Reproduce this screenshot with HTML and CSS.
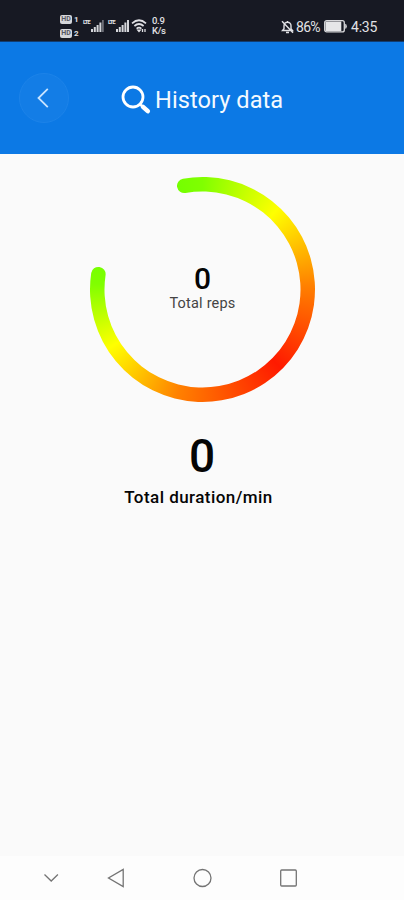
FILE: index.html
```html
<!DOCTYPE html>
<html lang="en">
<head>
    <meta charset="UTF-8">
    <meta name="viewport" content="width=device-width, initial-scale=1.0">
    <title>History data</title>
    <link rel="stylesheet" href="styles.css">
</head>
<body>
    <div class="screen">
        <div class="status-bar">
            <div class="status-left">
                <div class="sims">
                    <div class="sim"><span class="hd">HD</span><span>1</span></div>
                    <div class="sim"><span class="hd">HD</span><span>2</span></div>
                </div>
                <div class="signal">
                    <span class="lte">LTE</span>
                    <svg width="13" height="12" viewBox="0 0 13 12"><path d="M0 9h2v3H0zM2.8 7h2v5h-2zM5.6 5h2v7h-2zM8.4 2.5h2V12h-2z" fill="#d5d6da"/><path d="M11 0h1.8v12H11z" fill="#6d6e77"/></svg>
                </div>
                <div class="signal second">
                    <span class="lte">LTE</span>
                    <svg width="13" height="12" viewBox="0 0 13 12"><path d="M0 9h2v3H0zM2.8 7h2v5h-2zM5.6 5h2v7h-2zM8.4 2.5h2V12h-2zM11 0h2v12h-2z" fill="#d5d6da"/></svg>
                </div>
                <svg class="wifi" width="17" height="14" viewBox="0 0 17 14" fill="none" stroke="#e0e0e4" stroke-width="1.7"><path d="M1 4.3Q8 -1.8 15 4.3M3.4 7Q8 3 12.6 7M5.6 9.6Q8 7.6 10.4 9.6"/><path d="M6.8 11.2h2.4L8 12.6zM11.5 10v3M14 10v3" stroke-width="1.3"/></svg>
                <div class="speed"><span>0.9</span><span>K/s</span></div>
            </div>
            <div class="status-right">
                <svg width="13" height="14" viewBox="0 0 13 14" fill="none" stroke="#e0e0e4" stroke-width="1.4"><path d="M1.5 10.5h10L10 8.7V5.8a3.5 3.5 0 0 0-7 0v2.9zM6.5 1v1.5M5 12.5h3M1 1.2l11 11.6"/></svg>
                <span class="percent">86%</span>
                <svg class="battery" width="23" height="13" viewBox="0 0 23 13"><rect x=".7" y=".7" width="19.6" height="11.2" rx="2" fill="none" stroke="#d9d9dc" stroke-width="1.3"/><path d="M1.5 1.5h15.8v9.6H1.5z" fill="#e6e6e8"/><path d="M21.2 3.8q1.6 0 1.6 2.5t-1.6 2.5z" fill="#d9d9dc"/></svg>
                <span class="time">4:35</span>
            </div>
        </div>

        <header class="header">
            <button class="back" aria-label="Back">
                <svg width="12" height="20" viewBox="0 0 12 20" fill="none" stroke="#c8e4ff" stroke-width="1.8"><path d="M10.8 .8L1.5 10l9.3 9.2"/></svg>
            </button>
            <div class="title">
                <svg width="30" height="30" viewBox="0 0 30 30" fill="none" stroke="#fff"><circle cx="12" cy="12" r="10" stroke-width="2.8"/><path d="M19 19.2l3 3" stroke-width="2.5"/><path d="M22 21.8l4.8 4.4" stroke-width="4.5" stroke-linecap="round"/></svg>
                <h1>History data</h1>
            </div>
        </header>

        <main class="content">
            <svg class="defs" width="0" height="0">
                <clipPath id="arc">
                    <path d="M93 1.7A112.5 112.5 0 1 1 1.2 96.1A7.25 7.25 0 0 1 15.55 98.2A98 98 0 1 0 95.5 16A7.25 7.25 0 0 1 93 1.7Z"/>
                </clipPath>
            </svg>
            <div class="gauge">
                <div class="ring"></div>
                <div class="reps">
                    <span class="reps-value">0</span>
                    <span class="reps-label">Total reps</span>
                </div>
            </div>
            <div class="duration">
                <span class="duration-value">0</span>
                <span class="duration-label">Total duration/min</span>
            </div>
        </main>

        <nav class="nav-bar">
            <svg width="404" height="44" viewBox="0 0 404 44" fill="none" stroke="#747474" stroke-width="1.3">
                <path d="M44.5 18.5l6.7 6.5 6.7-6.5"/>
                <path d="M123.2 13.5v17L108.5 22z"/>
                <circle cx="202.5" cy="22" r="8.5"/>
                <rect x="280.7" y="14" width="15.6" height="16" rx="1"/>
            </svg>
        </nav>
    </div>
</body>
</html>
```
FILE: styles.css
```css
* {
    margin: 0;
    padding: 0;
    box-sizing: border-box;
}

body {
    font-family: Roboto, sans-serif;
    background: #fafafa;
    color: #050505;
}

svg {
    display: block;
    flex-shrink: 0;
}

.screen {
    width: 404px;
    height: 900px;
    display: flex;
    flex-direction: column;
    overflow: hidden;
}

.status-bar {
    height: 42px;
    background: #171923;
    border-bottom: 1px solid #123c70;
    color: #e2e2e5;
    display: flex;
    justify-content: space-between;
    padding: 14px 27px 0 60px;
}

.status-left {
    display: flex;
}

.sims {
    width: 23px;
    display: flex;
    flex-direction: column;
    gap: 4px;
}

.sim {
    display: flex;
    gap: 2px;
    align-items: center;
    height: 10px;
    font-size: 8px;
    font-weight: bold;
}

.hd {
    width: 12px;
    height: 9px;
    line-height: 9px;
    border-radius: 2px;
    background: #d5d6da;
    color: #555761;
    font-size: 7px;
    text-align: center;
}

.signal {
    display: flex;
    padding-top: 4px;
    width: 24px;
}

.signal.second {
    width: 25px;
    margin-left: 1px;
}

.signal svg {
    margin-top: 2px;
}

.lte {
    font-size: 6px;
    line-height: 7px;
    width: 8px;
    font-weight: bold;
    letter-spacing: -1px;
}

.wifi {
    margin: 5px 0 0 -2px;
}

.speed {
    display: flex;
    flex-direction: column;
    margin-left: 4px;
    padding-top: 2px;
    font-size: 9.5px;
    line-height: 10px;
    font-weight: 500;
    letter-spacing: -0.3px;
}

.status-right {
    display: flex;
    align-items: center;
    height: 25px;
    font-size: 14px;
    font-weight: 400;
}

.percent {
    width: 26px;
    margin-left: 2px;
    letter-spacing: -0.7px;
}

.battery {
    margin: 0 4px 0 2px;
}

.time {
    width: 26px;
    white-space: nowrap;
    letter-spacing: -0.2px;
}

.header {
    height: 112px;
    background: #0c79e5;
    display: flex;
    align-items: center;
    padding-left: 19px;
}

.back {
    width: 50px;
    height: 50px;
    border-radius: 50%;
    border: 1px solid #1c83e9;
    background: #137de6;
    display: flex;
    align-items: center;
    justify-content: center;
    padding-right: 3px;
}

.title {
    display: flex;
    align-items: center;
    gap: 4px;
    margin-left: 52px;
    padding-top: 3px;
    color: #f4faff;
}

.title h1 {
    font-size: 23.6px;
    line-height: 28px;
    font-weight: 400;
    letter-spacing: 0.05px;
}

.content {
    flex: 1;
    background: #fafafa;
    display: flex;
    flex-direction: column;
    align-items: center;
    padding-top: 23px;
}

.defs {
    height: 0;
}

.gauge {
    width: 225px;
    height: 225px;
    display: grid;
    margin-left: 1px;
}

.gauge > * {
    grid-area: 1 / 1;
}

.ring {
    background: conic-gradient(#80ff00 0deg, #ffff00 43deg, #ff8000 88deg, #ff1a00 135deg, #ff8000 193deg, #ffff00 238deg, #80ff00 273deg, #59ff00 315deg, #80ff00 360deg);
    clip-path: url(#arc);
}

.reps {
    display: flex;
    flex-direction: column;
    align-items: center;
    padding-top: 85px;
}

.reps-value {
    font-size: 30px;
    line-height: 34px;
    font-weight: 500;
}

.reps-label {
    font-size: 14.5px;
    line-height: 16px;
    letter-spacing: 0.2px;
    color: #444;
}

.duration {
    display: flex;
    flex-direction: column;
    align-items: center;
    padding-top: 27px;
}

.duration-value {
    font-size: 46px;
    line-height: 54px;
    font-weight: 500;
}

.duration-label {
    font-size: 17px;
    line-height: 20px;
    font-weight: 500;
    letter-spacing: 0.45px;
    margin-top: 4px;
    margin-right: 7px;
}

.nav-bar {
    height: 44px;
    background: #fdfdfd;
}
```
